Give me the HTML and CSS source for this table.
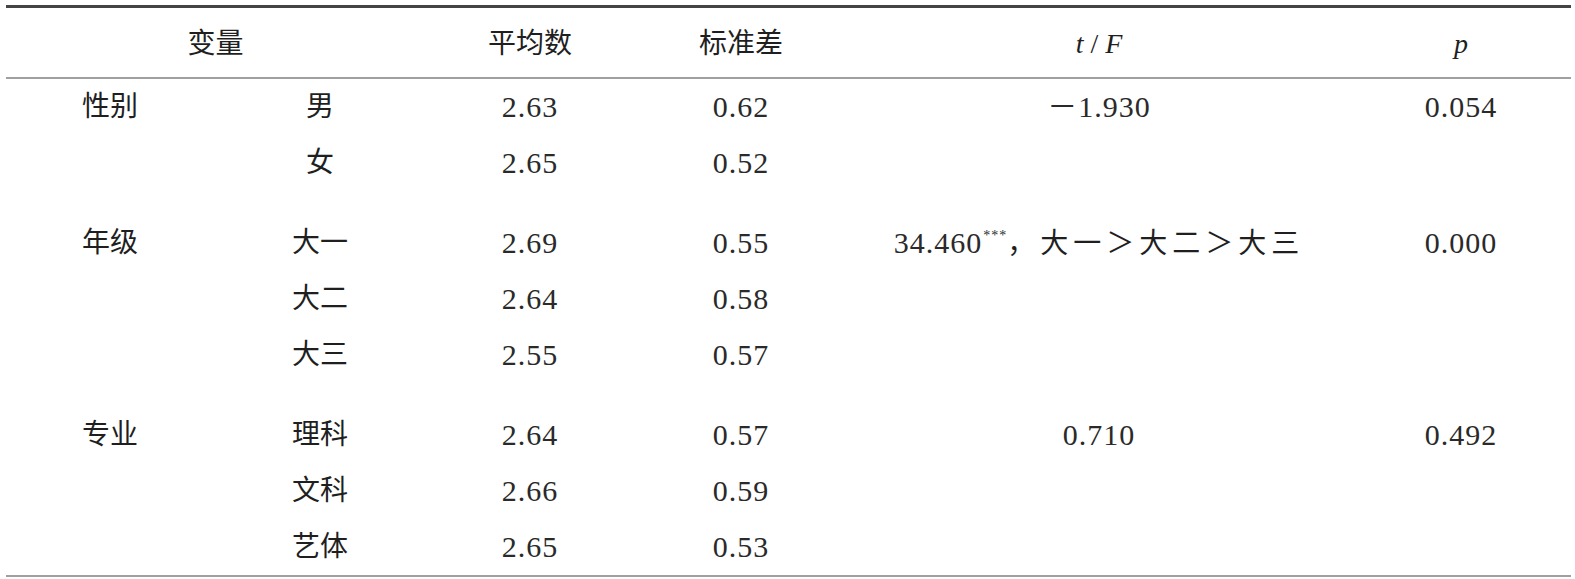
FILE: index.html
```html
<!DOCTYPE html>
<html lang="zh">
<head>
<meta charset="utf-8">
<link rel="stylesheet" href="styles.css">
</head>
<body>
<table class="stats">
  <colgroup>
    <col class="c1"><col class="c2"><col class="c3"><col class="c4"><col class="c5"><col class="c6">
  </colgroup>
  <thead>
    <tr class="head">
      <th colspan="2">变量</th>
      <th>平均数</th>
      <th>标准差</th>
      <th><i>t</i> / <i>F</i></th>
      <th><i>p</i></th>
    </tr>
  </thead>
  <tbody>
    <tr><td class="lbl">性别</td><td>男</td><td class="num">2.63</td><td class="num">0.62</td><td class="num">－1.930</td><td class="num">0.054</td></tr>
    <tr class="last"><td></td><td>女</td><td class="num">2.65</td><td class="num">0.52</td><td></td><td></td></tr>
    <tr><td class="lbl">年级</td><td>大一</td><td class="num">2.69</td><td class="num">0.55</td><td class="num">34.460<sup>***</sup><span class="cjk">，大一＞大二＞大三</span></td><td class="num">0.000</td></tr>
    <tr><td></td><td>大二</td><td class="num">2.64</td><td class="num">0.58</td><td></td><td></td></tr>
    <tr class="last"><td></td><td>大三</td><td class="num">2.55</td><td class="num">0.57</td><td></td><td></td></tr>
    <tr><td class="lbl">专业</td><td>理科</td><td class="num">2.64</td><td class="num">0.57</td><td class="num">0.710</td><td class="num">0.492</td></tr>
    <tr><td></td><td>文科</td><td class="num">2.66</td><td class="num">0.59</td><td></td><td></td></tr>
    <tr><td></td><td>艺体</td><td class="num">2.65</td><td class="num">0.53</td><td></td><td></td></tr>
  </tbody>
</table>
</body>
</html>
```

FILE: styles.css
```css
html, body {
  margin: 0;
  padding: 0;
  background: #ffffff;
}

body {
  padding: 5px 4px 0 6px;
  font-family: "Liberation Serif", "Noto Sans CJK SC", serif;
  color: #1f1f1f;
}

.stats {
  width: 1565px;
  border-collapse: collapse;
  table-layout: fixed;
  border-top: 3px solid #444444;
  border-bottom: 2px solid #a0a0a0;
  font-size: 28px;
}

.c1 { width: 209px; }
.c2 { width: 210px; }
.c3 { width: 210px; }
.c4 { width: 212px; }
.c5 { width: 504px; }
.c6 { width: 220px; }

.stats th,
.stats td {
  padding: 0;
  text-align: center;
  vertical-align: middle;
  font-weight: normal;
  white-space: nowrap;
  line-height: 1;
}

.head th {
  height: 67px;
  border-bottom: 2px solid #a0a0a0;
  padding-top: 2px;
}

.head i {
  font-family: "Liberation Serif", serif;
  font-style: italic;
}

.stats tbody td {
  height: 56px;
}

.stats tbody tr.last td {
  border-bottom: 24px solid transparent;
}

.stats td.lbl {
  text-align: left;
  padding-left: 76px;
}

.num {
  font-size: 30px;
  letter-spacing: 1px;
  color: #2a2a2a;
}

.num sup {
  font-size: 14px;
  letter-spacing: 1px;
  vertical-align: 13px;
  margin-left: 1px;
}

.num .cjk {
  font-size: 28px;
  letter-spacing: 5px;
  color: #1f1f1f;
}
```
